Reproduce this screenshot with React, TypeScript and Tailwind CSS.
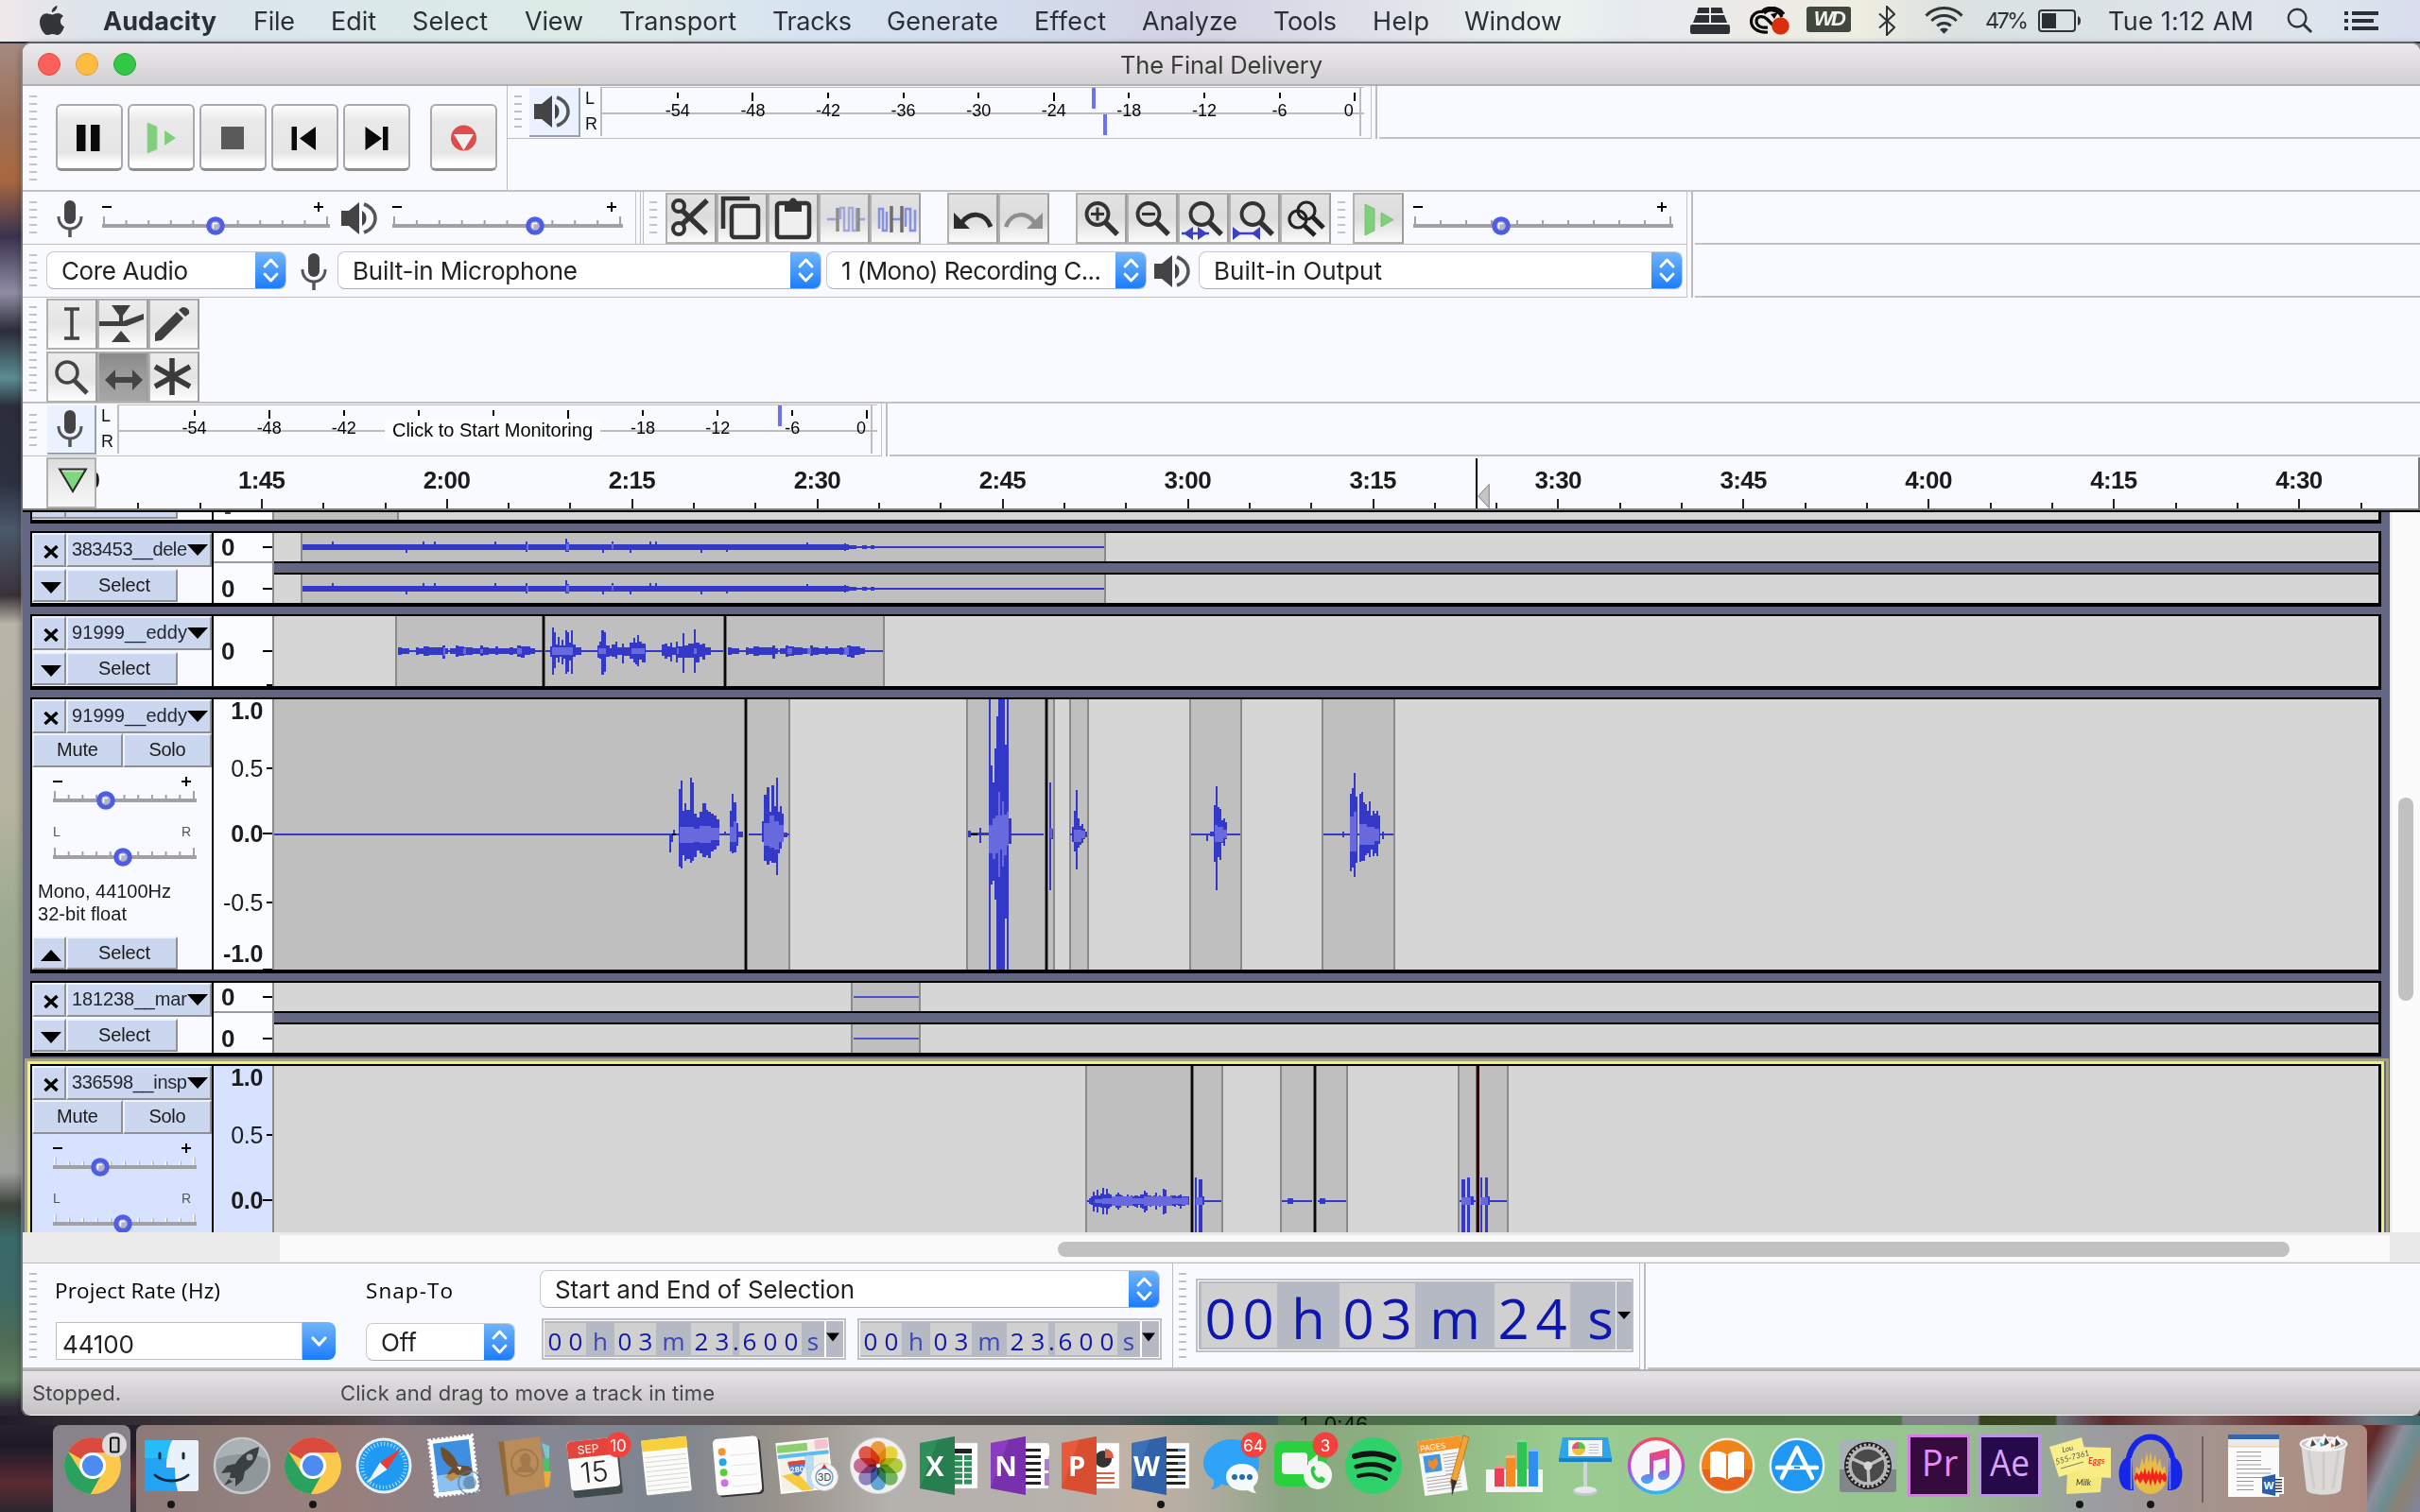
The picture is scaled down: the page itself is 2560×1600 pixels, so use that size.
import React, { useLayoutEffect, useRef, useState } from "react";
import type { ReactNode } from "react";

/* ---------- text fitted to the width of its box by tracking ---------- */
function Fit({ children, className = "" }: { children: string; className?: string }) {
  const box = useRef<HTMLSpanElement>(null);
  const inner = useRef<HTMLSpanElement>(null);
  const [ls, setLs] = useState(0);
  useLayoutEffect(() => {
    if (!box.current || !inner.current) return;
    const natural = inner.current.getBoundingClientRect().width;
    const target = box.current.getBoundingClientRect().width;
    setLs((target - natural) / Math.max(1, children.length - 1));
  }, [children]);
  return (
    <span ref={box} className={`block shrink-0 whitespace-pre ${className}`}>
      <span ref={inner} style={{ letterSpacing: `${ls}px` }}>
        {children}
      </span>
    </span>
  );
}

/* ---------- small shared parts ---------- */
function Grip({ n, className = "" }: { n: number; className?: string }) {
  return (
    <div className={`flex w-2 shrink-0 flex-col gap-1.5 ${className}`}>
      {Array.from({ length: n }, (_, i) => (
        <div key={i} className="h-0.5 w-2 bg-[#c2c2c6]" />
      ))}
    </div>
  );
}

function Mic({ className = "" }: { className?: string }) {
  return (
    <svg viewBox="0 0 28 40" className={`h-10 w-7 shrink-0 ${className}`}>
      <rect x="8" y="0" width="12" height="25" rx="6" fill="#444" />
      <path d="M2 17C2 25 7 30 14 30S26 25 26 17" fill="none" stroke="#555" strokeWidth="3" />
      <path d="M14 30V39" stroke="#555" strokeWidth="3.5" />
    </svg>
  );
}

function Speaker({ className = "" }: { className?: string }) {
  return (
    <svg viewBox="0 0 38 36" className={`h-9 w-[38px] shrink-0 ${className}`}>
      <path d="M0 10H8L19 1V35L8 26H0Z" fill="#444" />
      <path d="M22 10C28 13 28 23 22 26Z" fill="#444" />
      <path d="M24 3C40 9 40 27 24 33" fill="none" stroke="#555" strokeWidth="3.5" />
    </svg>
  );
}

function Slider({ w, thumb, light = false, ticks = 11, className = "" }: { w: number; thumb: number; light?: boolean; ticks?: number; className?: string }) {
  const step = (w - 5) / (ticks - 1);
  return (
    <svg width={w} height={24} viewBox={`0 0 ${w} 24`} className={`block shrink-0 overflow-visible ${className}`}>
      {Array.from({ length: ticks }, (_, i) => {
        const big = i === 0 || i === ticks - 1;
        return (
          <g key={i}>
            <rect x={1 + i * step} y={big ? 1 : 5} width="2" height={big ? 9 : 5} fill={light ? "#fff" : "#a2a2a2"} />
            {light && <rect x={2.5 + i * step} y={big ? 1 : 5} width="1" height={big ? 9 : 5} fill="#a2a2a2" />}
          </g>
        );
      })}
      <rect x="0" y="9" width={w} height="4" fill="#a1a1a1" />
      <circle cx={thumb} cy="11" r="7.3" fill="#b4b4c0" stroke="#4f5ce6" strokeWidth="5" />
      <path d={`M${thumb - 2.5} 13.5V8.5H${thumb + 2}`} stroke="#fff" strokeWidth="1.5" fill="none" />
    </svg>
  );
}

function SliderBlock({ w, thumb, ticks, className = "" }: { w: number; thumb: number; ticks?: number; className?: string }) {
  return (
    <div className={`flex shrink-0 flex-col ${className}`}>
      <div className="flex h-[16px] items-center justify-between pr-1.5">
        <span className="h-[2px] w-[10px] bg-black" />
        <PlusSign />
      </div>
      <Slider w={w} thumb={thumb} ticks={ticks} className="mt-px" />
    </div>
  );
}

function PlusSign() {
  return (
    <svg viewBox="0 0 12 12" className="size-3 shrink-0">
      <path d="M1 6H11M6 1V11" stroke="#000" strokeWidth="2" />
    </svg>
  );
}

function Chevrons() {
  return (
    <svg viewBox="0 0 33 40" className="h-full w-[33px]">
      <path d="M10 16L16.500 9L23 16M10 24L16.500 31L23 24" fill="none" stroke="#fff" strokeWidth="2.8" strokeLinecap="round" strokeLinejoin="round" />
    </svg>
  );
}

function Dropdown({ children, className = "" }: { children: ReactNode; className?: string }) {
  return (
    <div className={`flex h-10 shrink-0 items-stretch overflow-hidden rounded-[8px] border border-[#c9c9cd] border-b-[#aeaeb2] bg-white ${className}`}>
      <div className="flex flex-1 items-center pt-0.5 pl-[15px] font-[Inter] text-[26px] leading-none text-[#222]">{children}</div>
      <div className="-my-px -mr-px w-[33px] bg-linear-to-b from-[#6fb5f9] to-[#157bfb]">
        <Chevrons />
      </div>
    </div>
  );
}

function ToolBtn({ children, pressed = false, tone = "a" }: { children?: ReactNode; pressed?: boolean; tone?: "a" | "b" }) {
  const bg = pressed ? "from-[#8a8a8a] via-[#9c9c9c] to-[#a6a6a6]" : tone === "a" ? "from-[#e2e2e2] via-[#dcdcdc] to-[#fbfbfb]" : "from-[#ececec] via-[#e4e4e4] to-[#fdfdfd]";
  return (
    <div className={`flex h-[54px] w-[54px] shrink-0 items-center justify-center border-2 border-[#b0b0b0] border-r-[#9e9e9e] bg-linear-to-b ${bg}`}>
      {children}
    </div>
  );
}

function EndLines({ className = "" }: { className?: string }) {
  return (
    <div className={`flex shrink-0 gap-1 ${className}`}>
      <div className="w-px bg-[#c4c4c4]" />
      <div className="w-0.5 bg-[#bdbdbd]" />
    </div>
  );
}

/* ---------- menu bar ---------- */
function MenuBar() {
  return (
    <div className="flex h-11 shrink-0 items-center bg-[linear-gradient(90deg,#efe8ea_0,#dde4ea_90px,#dbe6ec_250px,#dcebe6_600px,#dfe9ea_700px,#d6e4f1_850px,#d3dcec_1080px,#d2d2e4_1250px,#dcdde8_1400px,#ebf2ee_1650px,#e6eaf0_1730px,#eceae6_1850px,#efeee2_1960px,#dce2e0_2060px,#dbe2e6_2180px,#dfe5ea_2400px,#dbe4ee_2480px,#d9dcec_2560px)] font-[Inter] text-[27px] leading-none text-[#2b3036]">
      <svg viewBox="0 0 26 32" className="ml-[42px] h-8 w-[26px] shrink-0" fill="#333539">
        <path d="M18.500 0C18.800 3 16 6.800 12.800 7C12.400 4 15.400 .6 18.500 0ZM13.300 9.600C14.800 9.600 16.300 8 19 8C21.500 8 23.800 9.300 25 11.200C20.500 13.700 21 20.300 26 22.200C25 25.500 21.900 31 19 31C17 31 16 29.900 13.500 29.900C11 29.900 10 31 8 31C4.500 31 0 23.500 0 17.500C0 11.500 3.800 8.300 7.500 8.300C10 8.300 12 9.600 13.300 9.600Z" />
      </svg>
      <Fit className="ml-[41px] w-[120px] font-bold">Audacity</Fit>
      <Fit className="ml-[39px] w-[44px]">File</Fit>
      <Fit className="ml-[38px] w-[48px]">Edit</Fit>
      <Fit className="ml-[38px] w-[80px]">Select</Fit>
      <Fit className="ml-[39px] w-[62px]">View</Fit>
      <Fit className="ml-[38px] w-[124px]">Transport</Fit>
      <Fit className="ml-[38px] w-[84px]">Tracks</Fit>
      <Fit className="ml-[37px] w-[118px]">Generate</Fit>
      <Fit className="ml-[38px] w-[76px]">Effect</Fit>
      <Fit className="ml-[38px] w-[101px]">Analyze</Fit>
      <Fit className="ml-[38px] w-[67px]">Tools</Fit>
      <Fit className="ml-[38px] w-[60px]">Help</Fit>
      <Fit className="ml-[37px] w-[103px]">Window</Fit>
      <svg viewBox="0 0 42 28" className="ml-[136px] h-7 w-[42px] shrink-0" fill="#2c2f36">
        <path d="M8.500 0H20V6H7ZM22 0H33.500L35 6H22ZM6 8H20V16H3ZM22 8H36L39 16H22Z" />
        <rect x="0" y="18" width="42" height="10" rx="2" />
      </svg>
      <svg viewBox="0 0 42 30" className="ml-[21px] h-[30px] w-[42px] shrink-0">
        <path d="M19 27C8 28 1.500 22 1.500 15.500C1.500 9 7 4.500 13 5.500C17 0 30 -1 36 8" fill="none" stroke="#0a0a0a" strokeWidth="3.200" />
        <path d="M19 22C12 23 7 20 7 15.500C7 10 14 9 18 13L25 20M15 7C21 1 31 4 34 11" fill="none" stroke="#0a0a0a" strokeWidth="3.200" />
        <path d="M22 8L30 6L26 13Z" fill="#0a0a0a" />
        <circle cx="32.500" cy="20.500" r="9.300" fill="#d8300c" />
      </svg>
      <div className="ml-[18px] -mt-1 flex h-[27px] w-[47px] shrink-0 items-center justify-center rounded-[3px] bg-[#40473f]">
        <span className="font-['Liberation_Sans'] text-[22px] leading-none font-bold tracking-[-2.500px] text-[#f3f3ea] italic">WD</span>
      </div>
      <svg viewBox="0 0 18 32" className="ml-[29px] h-8 w-[18px] shrink-0">
        <path d="M1 8.500L17 23L9 31V1L17 9L1 23.500" fill="none" stroke="#2c3236" strokeWidth="2" />
      </svg>
      <svg viewBox="0 0 42 30" className="ml-[31px] h-[30px] w-[41px] shrink-0">
        <path d="M1.500 9.500C12 -1.500 30 -1.500 40.500 9.500M7.500 15C15 7.500 27 7.500 34.500 15M13.500 20.500C17.500 16.500 24.500 16.500 28.500 20.500" fill="none" stroke="#2f3438" strokeWidth="3" />
        <path d="M21 29L16.500 24.500C19 22.500 23 22.500 25.500 24.500Z" fill="#2f3438" />
      </svg>
      <Fit className="ml-[23px] w-[46px] text-[23.500px]">47%</Fit>
      <svg viewBox="0 0 46 24" className="ml-[10px] h-6 w-[46px] shrink-0">
        <rect x="1" y="1" width="38" height="22" rx="3" fill="none" stroke="#2f3438" strokeWidth="2" />
        <rect x="4" y="4" width="15" height="16" fill="#2a2e32" />
        <path d="M42 7C46 8 46 16 42 17Z" fill="#2f3438" />
      </svg>
      <Fit className="ml-[28px] w-[154px]">Tue 1:12 AM</Fit>
      <svg viewBox="0 0 30 28" className="ml-[35px] h-7 w-[29px] shrink-0">
        <circle cx="11.500" cy="11" r="9.700" fill="none" stroke="#2f3438" strokeWidth="2.400" />
        <path d="M18.500 18L27 26.500" stroke="#2f3438" strokeWidth="3" />
      </svg>
      <svg viewBox="0 0 36 20" className="ml-[32px] h-5 w-9 shrink-0" fill="#2b2f38">
        <path d="M0 0H4V4H0ZM8 0H36V4H8ZM0 8H4V12H0ZM8 8H31V12H8ZM0 16H4V20H0ZM8 16H36V20H8Z" />
      </svg>
    </div>
  );
}

/* ---------- transport and playback meter ---------- */
function TransportBtn({ children, className = "" }: { children: ReactNode; className?: string }) {
  return (
    <div className={`flex h-[71px] w-[71px] shrink-0 items-center justify-center rounded-[6px] border-2 border-[#a9a9a9] border-b-[3px] border-b-[#8e8e8e] bg-[linear-gradient(180deg,#fdfdfd_0%,#e9e9e9_25%,#e6e6e6_75%,#ffffff_92%)] ${className}`}>
      <svg viewBox="0 0 66 66" className="size-[66px]">{children}</svg>
    </div>
  );
}

function MeterScale({ labels, cell, offset }: { labels: { t: string; long?: boolean }[]; cell: string; offset: string }) {
  return (
    <div className={`absolute inset-0 flex ${offset}`}>
      {labels.map((l, i) => (
        <div key={i} className={`flex shrink-0 flex-col items-center ${cell}`}>
          <div className={`mt-[7px] w-0.5 bg-black ${l.long ? "mb-px h-[9px]" : "mb-[4px] h-[6px]"}`} />
          <span className={`font-['Liberation_Sans'] text-[18px] leading-[18px] text-black ${l.t === "0" ? "-ml-[13px]" : ""}`}>{l.t}</span>
        </div>
      ))}
    </div>
  );
}

function LR({ className = "" }: { className?: string }) {
  return (
    <div className={`flex w-[14px] shrink-0 flex-col font-['Liberation_Sans'] text-[18px] leading-none text-[#111] ${className}`}>
      <span>L</span>
      <span className="mt-[9px]">R</span>
    </div>
  );
}

function RowTop() {
  return (
    <div className="flex h-[112px] shrink-0 border-b-2 border-[#c2c2c2]">
      <div className="flex w-[513px] shrink-0 border-r border-[#bdbdbd] pl-[7px]">
        <Grip n={12} className="mt-[10px]" />
        <div className="mt-[19px] ml-5 flex gap-[5px]">
          <TransportBtn>
            <path d="M19 20H28.500V48H19ZM34 20H43.500V48H34Z" fill="#0a0a0a" />
          </TransportBtn>
          <TransportBtn>
            <path d="M18 18L28 22V46L18 50ZM36 26L48 34L36 42Z" fill="#7fcf7c" />
            <path d="M18 18L28 22V46L18 50Z" fill="none" stroke="#9bd698" />
          </TransportBtn>
          <TransportBtn>
            <rect x="20" y="22" width="24" height="24" fill="#5a5a5a" />
          </TransportBtn>
          <TransportBtn>
            <path d="M18.500 22H24V47H18.500ZM44 22V47L27 34.500Z" fill="#0a0a0a" />
          </TransportBtn>
          <TransportBtn>
            <path d="M20.500 22V47L38 34.500ZM39 22H44.500V47H39Z" fill="#0a0a0a" />
          </TransportBtn>
          <TransportBtn className="ml-4">
            <circle cx="32.500" cy="34" r="13.500" fill="#e04c4c" />
            <path d="M22 30H43L32.500 47Z" fill="#f0f0f0" />
          </TransportBtn>
        </div>
      </div>
      <div className="flex min-w-0 flex-1 flex-col">
        <div className="flex h-14 shrink-0 items-stretch">
          <div className="flex w-[913px] shrink-0 border-b border-[#bdbdbd] pl-[7px]">
            <Grip n={5} className="mt-[10px]" />
            <div className="mt-[2px] ml-2 flex h-[52px] w-[54px] items-center justify-center border-r-2 border-b-2 border-[#98a0b4] bg-[#eaf1ff] pr-1">
              <Speaker />
            </div>
            <LR className="mt-[4px] ml-[5px]" />
            <div className="relative ml-[2px] w-[808px] shrink-0">
              <div className="flex h-full flex-col">
                <div className="mt-px h-[28px] border-t border-b border-l-2 border-[#bdbdbd]" />
                <div className="h-[24px] border-t border-l-2 border-[#bdbdbd]" />
              </div>
              <MeterScale
                offset="pl-[42px]"
                cell="w-[79.600px]"
                labels={[{ t: "-54" }, { t: "-48", long: true }, { t: "-42" }, { t: "-36" }, { t: "-30" }, { t: "-24", long: true }, { t: "-18" }, { t: "-12" }, { t: "-6" }, { t: "0", long: true }]}
              />
              <div className="absolute top-[2px] left-[520px] h-[22px] w-1 bg-[#6b70f8]" />
              <div className="absolute top-[30px] left-[532px] h-[22px] w-1 bg-[#6b70f8]" />
              <div className="absolute top-[1px] left-[803px] h-[52px] w-[7px] border-l-2 border-[#bdbdbd]" />
            </div>
          </div>
          <EndLines />
          <div className="ml-[2px] flex-1 border-b-2 border-[#c2c2c2]" />
        </div>
      </div>
    </div>
  );
}

/* ---------- mixer, edit and play-at-speed ---------- */
function Magnifier({ children, shift = 0 }: { children?: ReactNode; shift?: number }) {
  return (
    <svg viewBox="0 0 50 50" className="size-[50px]">
      <circle cx={21 + shift} cy="20.500" r="11.500" fill="none" stroke="#333" strokeWidth="3.800" />
      <path d={`M${29 + shift} 29L${42 + shift} 42`} stroke="#333" strokeWidth="5.500" />
      {children}
    </svg>
  );
}

function RowMixer() {
  return (
    <div className="flex h-14 shrink-0">
      <div className="flex w-[1760px] shrink-0 border-b border-[#bdbdbd] pl-[7px]">
        <Grip n={5} className="mt-[10px]" />
        <Mic className="mt-[9px] ml-[21px]" />
        <SliderBlock w={241} thumb={120} className="mt-[8px] ml-5" />
        <Speaker className="mt-[10px] ml-3" />
        <SliderBlock w={244} thumb={151} className="mt-[8px] ml-4" />
        <div className="ml-[13px] flex gap-1">
          <div className="w-px bg-[#c4c4c4]" />
          <div className="w-1 border-x border-[#bdbdbd]" />
        </div>
        <Grip n={5} className="mt-[10px] ml-[6px]" />
        <div className="mt-px ml-[9px] flex">
          <ToolBtn>
            <svg viewBox="0 0 50 50" className="size-[50px]">
              <g fill="none" stroke="#333" strokeWidth="4">
                <circle cx="12" cy="12" r="6" />
                <circle cx="12" cy="36" r="6" />
                <path d="M16 17L41 41M16 31L42 6" strokeWidth="5.500" />
              </g>
            </svg>
          </ToolBtn>
          <ToolBtn>
            <svg viewBox="0 0 50 50" className="size-[50px]">
              <path d="M5 36V4H33" fill="none" stroke="#333" strokeWidth="4.500" />
              <rect x="14" y="12" width="28" height="33" rx="3" fill="#efefef" stroke="#333" strokeWidth="4.500" />
            </svg>
          </ToolBtn>
          <ToolBtn>
            <svg viewBox="0 0 50 50" className="size-[50px]">
              <rect x="8" y="9" width="34" height="36" rx="3" fill="#efefef" stroke="#333" strokeWidth="4.500" />
              <path d="M16 18V8H21C21 2 29 2 29 8H34V18Z" fill="#333" />
            </svg>
          </ToolBtn>
          <ToolBtn>
            <svg viewBox="0 0 50 50" className="size-[50px]">
              <path d="M7 26H17M38 26H47" stroke="#9aa2d8" strokeWidth="2.500" />
              <path d="M21 26V14H25V38H30V14H34V38H38V14" fill="none" stroke="#a2a8dc" strokeWidth="2.500" />
              <path d="M18 14V39M40 14V39" stroke="#8e8e8e" strokeWidth="3.500" />
            </svg>
          </ToolBtn>
          <ToolBtn>
            <svg viewBox="0 0 50 50" className="size-[50px]">
              <path d="M8 36V15H12V38H16V18M21 26H31M36 34V15H41V38H46V16" fill="none" stroke="#8490e4" strokeWidth="2.500" />
              <path d="M21 12V40M32 12V40" stroke="#6e6e6e" strokeWidth="3.500" />
            </svg>
          </ToolBtn>
        </div>
        <div className="mt-px ml-7 flex">
          <ToolBtn>
            <svg viewBox="0 0 50 50" className="size-[50px]">
              <path d="M44 34C38 18 22 18 14 29" fill="none" stroke="#2c2c2c" strokeWidth="5" />
              <path d="M5 19V36H22Z" fill="#2c2c2c" />
            </svg>
          </ToolBtn>
          <ToolBtn>
            <svg viewBox="0 0 50 50" className="size-[50px]">
              <path d="M6 34C12 18 28 18 36 29" fill="none" stroke="#8e8e8e" strokeWidth="4.500" />
              <path d="M45 19V36H28Z" fill="#8e8e8e" />
            </svg>
          </ToolBtn>
        </div>
        <div className="mt-px ml-7 flex">
          <ToolBtn>
            <Magnifier>
              <path d="M14 20.500H28M21 13.500V27.500" stroke="#333" strokeWidth="3" />
            </Magnifier>
          </ToolBtn>
          <ToolBtn>
            <Magnifier>
              <path d="M14 20.500H28" stroke="#333" strokeWidth="3" />
            </Magnifier>
          </ToolBtn>
          <ToolBtn>
            <Magnifier shift={2}>
              <path d="M2 41H31" stroke="#3a3fc4" strokeWidth="2.500" />
              <path d="M4 41L14 34V48ZM29 41L19 34V48Z" fill="#3a3fc4" />
            </Magnifier>
          </ToolBtn>
          <ToolBtn>
            <Magnifier shift={2}>
              <path d="M2 41H31" stroke="#3a3fc4" strokeWidth="2.500" />
              <path d="M2 34L11 41L2 48ZM31 34L22 41L31 48Z" fill="#3a3fc4" />
            </Magnifier>
          </ToolBtn>
          <ToolBtn>
            <svg viewBox="0 0 50 50" className="size-[50px]">
              <g fill="none" stroke="#222" strokeWidth="3.200">
                <circle cx="26" cy="17" r="9" />
                <circle cx="17" cy="26" r="9" />
                <path d="M32 23L44 35M23 32L35 43" strokeWidth="5" />
              </g>
            </svg>
          </ToolBtn>
        </div>
        <Grip n={5} className="mt-[10px] ml-[7px]" />
        <div className="mt-px ml-[8px]">
          <ToolBtn>
            <svg viewBox="0 0 50 50" className="size-[50px]">
              <path d="M11 10L21 15V38L11 43ZM28 19L41 26.500L28 34Z" fill="#7fcf7c" stroke="#6dbb6a" strokeWidth=".8" />
            </svg>
          </ToolBtn>
        </div>
        <SliderBlock w={275} thumb={93} className="mt-[8px] ml-[10px]" />
      </div>
      <EndLines />
      <div className="ml-[2px] flex-1 border-b-2 border-[#c2c2c2]" />
    </div>
  );
}

/* ---------- device toolbar ---------- */
function RowDevice() {
  return (
    <div className="flex h-14 shrink-0">
      <div className="flex w-[1760px] shrink-0 border-b border-[#bdbdbd] pl-[7px]">
        <Grip n={5} className="mt-[10px]" />
        <Dropdown className="mt-[7px] ml-[10px] w-[254px]">
          <Fit className="w-[134px]">Core Audio</Fit>
        </Dropdown>
        <Mic className="mt-[9px] ml-[15px]" />
        <Dropdown className="mt-[7px] ml-[11px] w-[512px]">
          <Fit className="w-[238px]">Built-in Microphone</Fit>
        </Dropdown>
        <Dropdown className="mt-[7px] ml-[5px] w-[339px]">
          <Fit className="w-[275px]">1 (Mono) Recording C...</Fit>
        </Dropdown>
        <Speaker className="mt-[10px] ml-[8px]" />
        <Dropdown className="mt-[7px] ml-[9px] w-[512px]">
          <Fit className="w-[178px]">Built-in Output</Fit>
        </Dropdown>
      </div>
      <EndLines />
      <div className="ml-[2px] flex-1 border-b-2 border-[#c2c2c2]" />
    </div>
  );
}

/* ---------- tools toolbar ---------- */
function RowTools() {
  return (
    <div className="flex h-28 shrink-0 border-b-2 border-[#c2c2c2] pl-[7px]">
      <Grip n={12} className="mt-[9px]" />
      <div className="ml-[10px] flex flex-col gap-[2px] pt-px">
        <div className="flex">
          <ToolBtn tone="b">
            <svg viewBox="0 0 50 50" className="size-[50px]">
              <path d="M17 9H33M17 40H33M25 9V40" stroke="#444" strokeWidth="3.500" />
            </svg>
          </ToolBtn>
          <ToolBtn tone="b">
            <svg viewBox="0 0 50 50" className="size-[50px]">
              <path d="M13 5H33L25 16V22L47 14V20L29 27H0V22H21V16ZM13 44H33L23 32Z" fill="#3f3f3f" />
            </svg>
          </ToolBtn>
          <ToolBtn tone="b">
            <svg viewBox="0 0 50 50" className="size-[50px]">
              <path d="M5 43V35L28 12L35 19L12 42Z" fill="#3f3f3f" />
              <path d="M30 10L34 7C39 7 42 10 41 14L37 17Z" fill="#3f3f3f" />
            </svg>
          </ToolBtn>
        </div>
        <div className="flex">
          <ToolBtn tone="b">
            <svg viewBox="0 0 50 50" className="size-[50px]">
              <circle cx="20" cy="20" r="11" fill="none" stroke="#444" strokeWidth="3.500" />
              <path d="M28 29L41 42" stroke="#444" strokeWidth="5" />
            </svg>
          </ToolBtn>
          <ToolBtn pressed>
            <svg viewBox="0 0 50 50" className="size-[50px]">
              <path d="M6 28L17 17V25H35V17L46 28L35 39V31H17V39Z" fill="#444" />
            </svg>
          </ToolBtn>
          <ToolBtn tone="b">
            <svg viewBox="0 0 50 50" className="size-[50px]">
              <path d="M23 5V44M5 14L42 35M42 14L5 35" stroke="#3a3a3a" strokeWidth="5.500" />
            </svg>
          </ToolBtn>
        </div>
      </div>
    </div>
  );
}

/* ---------- recording meter ---------- */
function RowRecMeter() {
  return (
    <div className="flex h-14 shrink-0">
      <div className="flex w-[908px] shrink-0 border-b border-[#bdbdbd] pl-[7px]">
        <Grip n={5} className="mt-[11px]" />
        <div className="mt-[2px] ml-[11px] flex h-[52px] w-[52px] items-center justify-center border-r-2 border-b-2 border-[#98a0b4] bg-[#eaf1ff]">
          <Mic className="-ml-[3px]" />
        </div>
        <LR className="mt-[4px] ml-[5px]" />
        <div className="relative ml-[3px] w-[804px] shrink-0">
          <div className="flex h-full flex-col">
            <div className="mt-px h-[28px] border-t border-b border-l-2 border-[#bdbdbd]" />
            <div className="h-[24px] border-t border-l-2 border-[#bdbdbd]" />
          </div>
          <MeterScale
            offset="pl-[42px]"
            cell="w-[79.100px]"
            labels={[{ t: "-54" }, { t: "-48", long: true }, { t: "-42" }, { t: " " }, { t: " " }, { t: " ", long: true }, { t: "-18" }, { t: "-12" }, { t: "-6" }, { t: "0", long: true }]}
          />
          <div className="absolute top-[16px] left-[283px] flex h-6 w-[228px] items-center justify-center bg-[#fcfdff]">
            <Fit className="w-[212px] font-['Liberation_Sans'] text-[20px] leading-none text-black">Click to Start Monitoring</Fit>
          </div>
          <div className="absolute top-[2px] left-[699px] h-[22px] w-1 bg-[#6b70f8]" />
          <div className="absolute top-[1px] left-[797px] h-[52px] w-[6px] border-l-2 border-[#bdbdbd]" />
        </div>
      </div>
      <EndLines />
      <div className="ml-[2px] flex-1 border-b-2 border-[#c2c2c2]" />
    </div>
  );
}

/* ---------- time ruler ---------- */
const marks = ["1:30", "1:45", "2:00", "2:15", "2:30", "2:45", "3:00", "3:15", "3:30", "3:45", "4:00", "4:15", "4:30"];

function TimeRuler() {
  return (
    <div className="relative h-[59px] shrink-0 overflow-hidden border-b-2 border-black">
      <div className="-ml-[41px] flex h-[57px] border-b-2 border-[#7d7d7d]">
        {marks.map((m) => (
          <div key={m} className="flex w-[195.950px] shrink-0 flex-col items-center">
            <Fit className="mt-[12px] w-[50px] font-['Liberation_Sans'] text-[26px] leading-[26px] font-bold text-[#1c1c1c]">{m}</Fit>
            <div className="mt-auto flex items-end gap-[63.300px]">
              <div className="h-1.5 w-0.5 bg-[#222]" />
              <div className="h-2.5 w-0.5 bg-[#222]" />
              <div className="h-1.5 w-0.5 bg-[#222]" />
            </div>
          </div>
        ))}
      </div>
      <div className="absolute top-px left-[25px] flex h-[54px] w-[53px] items-center justify-center border-2 border-[#b0b0b0] bg-linear-to-b from-[#dcdcdc] via-[#ececec] to-[#f6f6f6]">
        <svg viewBox="0 0 34 30" className="-mt-1 ml-0.5 h-[30px] w-[34px]">
          <path d="M3 2.500H31L17 26Z" fill="#7fd67c" stroke="#2a2a2a" strokeWidth="2" />
          <path d="M6 4.500H28" stroke="#c9f0c4" strokeWidth="1.500" />
        </svg>
      </div>
      <div className="absolute top-[2px] left-[1537px] h-[53px] w-0.5 bg-black" />
      <svg viewBox="0 0 13 27" className="absolute top-[29px] left-[1539px] h-[26px] w-[13px]">
        <path d="M12.500 .5L.5 13.500L12.500 26.500Z" fill="#c4c4c4" stroke="#7a7a7a" />
      </svg>
      <div className="absolute top-[1px] right-0 h-[55px] w-0.5 bg-[#777]" />
    </div>
  );
}

/* ---------- wave drawings ---------- */
type Seg = [number, number, number];

/* Stepped envelope round the centre line: each entry holds until the next x. */
function env(cy: number, segs: Seg[]) {
  let d = "";
  for (let i = 0; i < segs.length - 1; i++) {
    const [x, u, l] = segs[i];
    if (u + l > 0) d += `M${x} ${cy - u}H${segs[i + 1][0]}V${cy + l}H${x}Z`;
  }
  return d;
}

/* Repeatable noise for quiet passages. */
function noise(x0: number, x1: number, lo: number, hi: number, seed: number): Seg[] {
  const out: Seg[] = [];
  let s = seed;
  for (let x = x0; x < x1; x += 2) {
    s = (s * 16807) % 2147483647;
    const r = s / 2147483647;
    const swell = 0.55 + 0.45 * Math.sin((x - x0) / 9 + seed);
    const a = lo + (hi - lo) * r * r * Math.abs(swell);
    out.push([x, a, a * (0.8 + 0.3 * r)]);
  }
  out.push([x1, 0, 0]);
  return out;
}

function Clip({ x0, x1, y0, y1, splits = [], red = false }: { x0: number; x1: number; y0: number; y1: number; splits?: number[]; red?: boolean }) {
  return (
    <g>
      <rect x={x0} y={y0} width={x1 - x0} height={y1 - y0} fill="#bfbfbf" />
      <path d={`M${x0 + 1} ${y0}V${y1}M${x1 - 1} ${y0}V${y1}`} stroke="#8a8a8a" strokeWidth="2" />
      {splits.map((s) => (
        <g key={s}>
          <path d={`M${s} ${y0}V${y1}`} stroke="#6e6e6e" strokeWidth="4" />
          <path d={`M${s} ${y0}V${y1}`} stroke={red ? "#2a0505" : "#080808"} strokeWidth={red ? 3 : 2} />
        </g>
      ))}
    </g>
  );
}

function Canvas({ y, h, children }: { y: number; h: number; children?: ReactNode }) {
  return (
    <svg width="2226" height={h} viewBox={`290 ${y} 2226 ${h}`} className="block shrink-0 bg-[#d6d6d6]" shapeRendering="crispEdges">
      {children}
    </svg>
  );
}

const BLUE = "#3438c8";
const RMS = "#6769dc";

function WaveDele({ y, h }: { y: number; h: number }) {
  const cy = y + 15;
  const ticks: Seg[] = [[351, 6, 0], [429, 0, 6], [447, 6, 0], [459, 6, 0], [523, 6, 0], [556, 6, 5], [598, 9, 5], [600, 5, 5], [637, 0, 6], [647, 6, 3], [666, 0, 6], [687, 6, 0], [693, 6, 0], [741, 0, 6], [768, 0, 5], [853, 5, 0], [893, 4, 4]];
  return (
    <Canvas y={y} h={h}>
      <Clip x0={318} x1={1170} y0={y} y1={y + h} />
      <path d={env(cy, [[320, 3, 3], [898, 2, 2], [906, 1, 1], [912, 2, 2], [917, 1, 1], [921, 2, 2], [925, 1, 1], [1168, 0, 0]])} fill={BLUE} />
      {ticks.map(([x, u, l]) => (
        <rect key={x} x={x} y={cy - u} width="2" height={u + l} fill={BLUE} />
      ))}
      <rect x="599" y={cy - 4} width="3" height="8" fill={RMS} />
      <rect x="557" y={cy - 3} width="2" height="6" fill={RMS} />
      <rect x="647" y={cy - 4} width="2" height="6" fill={RMS} />
    </Canvas>
  );
}

function WaveEddySmall() {
  const c = 689;
  const mid: Seg[] = [
    [577, 1, 1], [582, 5, 6], [584, 25, 25], [586, 20, 18], [588, 7, 7], [590, 15, 12], [592, 6, 6], [594, 12, 14], [596, 6, 8], [598, 22, 24], [600, 20, 22], [602, 9, 10], [604, 22, 24], [606, 7, 6], [609, 4, 4], [615, 1, 1],
    [632, 6, 7], [634, 10, 8], [636, 22, 25], [639, 20, 22], [641, 6, 6], [645, 3, 5], [647, 7, 6], [651, 10, 8], [653, 4, 4], [658, 8, 13], [660, 4, 5], [666, 9, 8], [670, 14, 12], [672, 9, 14], [674, 17, 16], [676, 10, 9], [679, 8, 12], [683, 1, 1],
    [700, 7, 5], [703, 8, 8], [706, 5, 6], [709, 9, 11], [711, 4, 4], [715, 10, 12], [717, 5, 7], [722, 19, 23], [724, 6, 7], [728, 8, 7], [734, 23, 23], [736, 9, 12], [740, 7, 6], [743, 8, 9], [746, 4, 4], [752, 1, 1], [765, 0, 0],
  ];
  const quiet: Seg[] = [
    [0, 4, 4], [4, 3, 3], [12, 1, 1], [19, 4, 4], [22, 3, 3], [27, 5, 5], [33, 4, 4], [41, 4, 4], [47, 6, 8], [50, 3, 3], [53, 1, 1], [55, 3, 3], [61, 6, 6], [64, 5, 5], [70, 4, 4], [76, 4, 4], [79, 3, 3], [87, 6, 5], [90, 4, 4], [96, 3, 3], [103, 5, 4], [106, 3, 3], [118, 4, 4], [122, 3, 3], [126, 6, 6], [130, 5, 7], [134, 5, 4], [140, 3, 3], [145, 1, 1],
  ];
  const at = (x: number, end: number): Seg[] => [...quiet.map(([q, u, l]) => [x + q, u, l] as Seg), [end, 0, 0]];
  return (
    <Canvas y={652} h={74}>
      <Clip x0={418} x1={936} y0={652} y1={726} splits={[575, 767]} />
      <path d={env(c, at(421, 574))} fill={BLUE} />
      <path d={env(c, mid)} fill={BLUE} />
      <path d={env(c, at(770, 934))} fill={BLUE} />
      <path d={env(c, [[469, 4, 5], [471, 0, 0], [490, 3, 3], [493, 0, 0], [508, 2, 2], [511, 0, 0], [547, 3, 3], [552, 0, 0], [584, 4, 4], [606, 0, 0], [633, 3, 3], [641, 0, 0], [668, 3, 3], [682, 0, 0], [716, 3, 3], [718, 0, 0], [734, 3, 3], [737, 0, 0], [833, 3, 3], [838, 0, 0], [854, 3, 3], [858, 0, 0], [893, 4, 4], [898, 0, 0]])} fill={RMS} />
    </Canvas>
  );
}

function WaveEddyTall() {
  const c = 883;
  const a: Seg[] = [
    [290, 1, 1], [708, 1, 19], [710, 1, 8], [712, 5, 1], [714, 1, 1], [718, 48, 34], [720, 57, 36], [722, 25, 22], [724, 33, 28], [726, 26, 26], [730, 60, 30], [732, 55, 28], [734, 22, 24], [737, 18, 17], [740, 24, 20], [743, 33, 24], [747, 26, 22], [749, 24, 25], [752, 22, 18], [755, 20, 16], [758, 16, 12], [761, 1, 1], [766, 3, 1], [768, 1, 1], [772, 25, 18], [774, 43, 20], [776, 34, 19], [779, 12, 12], [781, 3, 3], [786, 0, 0],
    [792, 1, 1], [806, 14, 8], [808, 42, 28], [811, 50, 32], [814, 24, 28], [816, 52, 30], [819, 30, 30], [821, 60, 43], [823, 24, 20], [825, 30, 15], [827, 22, 8], [829, 2, 3], [833, 1, 1], [835, 0, 0],
    [1024, 4, 3], [1027, 2, 1], [1036, 7, 9], [1038, 2, 1], [1046, 143, 143], [1048, 73, 53], [1050, 55, 49], [1052, 91, 69], [1054, 125, 143], [1056, 143, 143], [1063, 95, 89], [1065, 143, 143], [1067, 17, 10], [1070, 1, 1], [1104, 0, 0],
    [1110, 55, 59], [1112, 6, 5], [1114, 0, 0],
    [1132, 1, 1], [1134, 8, 8], [1136, 25, 18], [1138, 47, 37], [1140, 17, 14], [1142, 9, 11], [1144, 11, 9], [1146, 6, 5], [1148, 3, 3], [1150, 0, 0],
    [1260, 1, 1], [1276, 1, 7], [1278, 1, 1], [1280, 3, 2], [1284, 31, 29], [1286, 51, 59], [1288, 29, 24], [1290, 27, 27], [1292, 15, 9], [1294, 17, 12], [1296, 13, 5], [1298, 1, 1], [1312, 0, 0],
    [1400, 1, 1], [1420, 3, 3], [1422, 1, 1], [1428, 43, 39], [1430, 49, 35], [1432, 65, 45], [1434, 40, 30], [1436, 1, 1], [1438, 43, 29], [1440, 45, 28], [1442, 34, 28], [1444, 32, 22], [1446, 25, 20], [1448, 35, 24], [1450, 20, 16], [1452, 25, 23], [1454, 22, 20], [1456, 25, 23], [1458, 20, 10], [1460, 1, 1], [1462, 3, 5], [1464, 1, 1], [1474, 0, 0],
  ];
  const r: Seg[] = [
    [719, 8, 9], [734, 6, 8], [740, 9, 9], [752, 7, 6], [761, 0, 0], [772, 8, 8], [776, 14, 8], [779, 0, 0], [808, 12, 12], [814, 20, 14], [819, 14, 16], [824, 10, 8], [829, 0, 0],
    [1046, 10, 20], [1050, 17, 26], [1053, 20, 20], [1056, 45, 45], [1058, 20, 16], [1060, 35, 34], [1062, 21, 22], [1065, 24, 12], [1067, 0, 0],
    [1111, 7, 4], [1113, 0, 0], [1136, 5, 8], [1144, 4, 4], [1148, 0, 0], [1285, 10, 8], [1288, 8, 8], [1294, 5, 4], [1298, 0, 0], [1428, 19, 18], [1432, 24, 18], [1435, 0, 0], [1438, 11, 11], [1446, 8, 11], [1454, 6, 7], [1459, 0, 0],
  ];
  return (
    <Canvas y={740} h={286}>
      <Clip x0={288} x1={836} y0={740} y1={1026} splits={[789]} />
      <Clip x0={1022} x1={1116} y0={740} y1={1026} splits={[1107]} />
      <Clip x0={1131} x1={1152} y0={740} y1={1026} />
      <Clip x0={1258} x1={1314} y0={740} y1={1026} />
      <Clip x0={1398} x1={1476} y0={740} y1={1026} />
      <path d={env(c, a)} fill={BLUE} />
      <path d={env(c, r)} fill={RMS} />
      <path d="M1027 883H1034M711 883H715" stroke="#000" strokeWidth="2" />
    </Canvas>
  );
}

function WaveMar({ y, h }: { y: number; h: number }) {
  return (
    <Canvas y={y} h={h}>
      <Clip x0={900} x1={974} y0={y} y1={y + h} />
      <rect x="903" y={y + 14} width="69" height="2" fill="#4e52cc" />
    </Canvas>
  );
}

function WaveInsp() {
  const c = 1271;
  const a: Seg[] = [
    [1264, 25, 40], [1266, 4, 4], [1268, 23, 40], [1272, 5, 4], [1274, 1, 1], [1292, 0, 0],
    [1356, 1, 1], [1362, 3, 3], [1368, 1, 1], [1388, 0, 0], [1394, 1, 1], [1396, 3, 3], [1402, 1, 1], [1424, 0, 0],
    [1544, 1, 1], [1546, 23, 40], [1550, 4, 4], [1552, 25, 40], [1555, 5, 4], [1559, 1, 1], [1561, 0, 0],
    [1566, 25, 40], [1568, 4, 4], [1571, 25, 40], [1574, 5, 4], [1576, 1, 1], [1594, 0, 0],
  ];
  return (
    <Canvas y={1128} h={176}>
      <Clip x0={1148} x1={1294} y0={1128} y1={1304} splits={[1261]} />
      <Clip x0={1354} x1={1426} y0={1128} y1={1304} splits={[1391]} />
      <Clip x0={1542} x1={1596} y0={1128} y1={1304} splits={[1563]} red />
      <path d={env(c, noise(1154, 1258, 5, 17, 911))} fill={BLUE} />
      <path d={env(c, [[1150, 1, 1], [1152, 3, 3], [1156, 4, 4], [1258, 0, 0]])} fill={BLUE} />
      <path d={env(c, [[1158, 2, 2], [1166, 3, 3], [1176, 5, 5], [1198, 3, 3], [1210, 5, 5], [1240, 3, 3], [1250, 4, 4], [1257, 0, 0]])} fill={RMS} />
      <path d={env(c, a)} fill={BLUE} />
      <path d={env(c, [[1265, 4, 4], [1272, 0, 0], [1546, 4, 4], [1556, 0, 0], [1566, 4, 4], [1574, 0, 0]])} fill={RMS} />
    </Canvas>
  );
}

/* ---------- track frames ---------- */
function PanelBtn({ children, className = "" }: { children?: ReactNode; className?: string }) {
  return (
    <div className={`flex shrink-0 items-center border-t-2 border-r-2 border-b-2 border-l-2 border-t-[#eef3ff] border-r-[#8e9096] border-b-[#8e9096] border-l-[#eef3ff] bg-[#cbd7ef] ${className}`}>{children}</div>
  );
}

function Tri({ up = false }: { up?: boolean }) {
  return (
    <svg viewBox="0 0 22 12" className={`h-3 w-[22px] shrink-0 ${up ? "rotate-180" : ""}`}>
      <path d="M0 0H22L11 12Z" fill="#000" />
    </svg>
  );
}

function SelectRow({ up = false, className = "" }: { up?: boolean; className?: string }) {
  return (
    <div className={`flex ${className}`}>
      <PanelBtn className="h-[35px] w-9 justify-center pt-[5px] pl-[3px]">
        <Tri up={up} />
      </PanelBtn>
      <PanelBtn className="h-[35px] w-[118px] justify-center pb-[2px] pl-[5px]">
        <Fit className="w-[55px] font-['Liberation_Sans'] text-[20px] leading-none text-[#1a1a1a]">Select</Fit>
      </PanelBtn>
    </div>
  );
}

function Panel({ name, full = false, active = false, gain = 56 }: { name: string; full?: boolean; active?: boolean; gain?: number }) {
  return (
    <div className={`flex w-[192px] shrink-0 flex-col overflow-hidden border-r-2 border-black ${active ? "bg-[#d6e2ff]" : "bg-[#f8faff]"}`}>
      <div className="flex shrink-0">
        <PanelBtn className="h-9 w-9 justify-center">
          <svg viewBox="0 0 16 14" className="mt-1 ml-1 h-3.5 w-4">
            <path d="M1.500 1L14.500 13M14.500 1L1.500 13" stroke="#000" strokeWidth="3.400" />
          </svg>
        </PanelBtn>
        <PanelBtn className="h-9 w-[154px] justify-start pb-0.5 pl-[4px]">
          <Fit className="w-[122px] font-['Liberation_Sans'] text-[20px] leading-[24px] text-[#23262e]">{name}</Fit>
          <div className="mt-0.5">
            <Tri />
          </div>
        </PanelBtn>
      </div>
      {full ? (
        <>
          <div className="flex shrink-0">
            <PanelBtn className="h-[36px] w-[96px] justify-center pb-0.5">
              <Fit className="w-[44px] font-['Liberation_Sans'] text-[20px] leading-none text-[#1a1a1a]">Mute</Fit>
            </PanelBtn>
            <PanelBtn className="h-[36px] w-[94px] justify-center pb-0.5">
              <Fit className="w-[39px] font-['Liberation_Sans'] text-[20px] leading-none text-[#1a1a1a]">Solo</Fit>
            </PanelBtn>
          </div>
          <div className="mt-[9px] ml-[22px] flex w-[152px] shrink-0 flex-col">
            <div className="flex h-3 items-center justify-between pr-[5px]">
              <span className="h-0.5 w-2.5 bg-black" />
              <PlusSign />
            </div>
            <Slider w={152} thumb={gain} light={active} className="mt-[3px]" />
            <div className="mt-[13px] flex h-3.5 items-center justify-between pr-[6px] font-['Liberation_Sans'] text-[14px] leading-none text-[#555]">
              <span>L</span>
              <span>R</span>
            </div>
            <Slider w={152} thumb={74} light={active} className="mt-[9px]" />
          </div>
          <div className="mt-[11px] ml-[6px] flex shrink-0 flex-col font-['Liberation_Sans'] text-[20px] leading-6 text-[#1a1a1a]">
            <Fit className="w-[141px]">Mono, 44100Hz</Fit>
            <Fit className="w-[94px]">32-bit float</Fit>
          </div>
          <SelectRow up className="mt-auto" />
        </>
      ) : (
        <SelectRow className="mt-[2px]" />
      )}
    </div>
  );
}

function RulerBox({ children, active = false }: { children?: ReactNode; active?: boolean }) {
  return <div className={`flex w-16 shrink-0 flex-col border-r-2 border-[#8a8a8a] ${active ? "bg-[#d6e2ff]" : "bg-[#fbfcff]"}`}>{children}</div>;
}

function ZeroMark({ className = "" }: { className?: string }) {
  return (
    <div className={`flex shrink-0 items-center justify-between pl-[8px] font-['Liberation_Sans'] text-[26px] leading-none font-bold text-[#1c1c1c] ${className}`}>
      <span className="-mt-px">0</span>
      <span className="h-0.5 w-2.5 bg-black" />
    </div>
  );
}

function ScaleMark({ t, bold = false, tick = "", className = "" }: { t: string; bold?: boolean; tick?: string; className?: string }) {
  return (
    <div className={`flex h-6 shrink-0 items-center justify-end font-['Liberation_Sans'] text-[25px] leading-none tracking-[-0.300px] text-[#1c1c1c] ${bold ? "font-bold" : ""} ${tick ? "" : "pr-[10px]"} ${className}`}>
      <span>{t}</span>
      {tick && <span className={`h-0.5 bg-black ${tick}`} />}
    </div>
  );
}

function TallScale({ active = false }: { active?: boolean }) {
  return (
    <RulerBox active={active}>
      <ScaleMark t="1.0" bold />
      <ScaleMark t="0.5" tick="w-1.5 ml-1" className="mt-[37px]" />
      <ScaleMark t="0.0" bold tick="w-2.5" className="mt-[45px]" />
      <ScaleMark t="-0.5" tick="w-1.5 ml-1" className="mt-[49px]" />
      <ScaleMark t="-1.0" bold className="mt-[30px]" />
      <span className="mt-[4px] h-0.5 w-2.5 self-end bg-black" />
    </RulerBox>
  );
}

function TrackFrame({ children, className = "" }: { children: ReactNode; className?: string }) {
  return <div className={`flex shrink-0 border-t-2 border-r-[3px] border-b-4 border-l-2 border-black ${className}`}>{children}</div>;
}

function StereoBody({ name, top, bottom }: { name: string; top: ReactNode; bottom: ReactNode }) {
  return (
    <>
      <Panel name={name} />
      <RulerBox>
        <ZeroMark className="h-[30px]" />
        <div className="h-[2px] border-t-2 border-[#9a9a9a]" />
        <ZeroMark className="mt-[14px] h-[26px]" />
      </RulerBox>
      <div className="flex flex-col">
        {top}
        <div className="h-[14px] border-y-2 border-black bg-[#626682]" />
        {bottom}
      </div>
    </>
  );
}

function Tracks() {
  return (
    <div className="flex h-[762px] shrink-0">
      <div className="flex w-[2504px] shrink-0 flex-col overflow-hidden bg-[#626682]">
        <TrackFrame className="ml-2 h-3 w-[2487px] border-t-0!">
          <div className="flex w-[192px] shrink-0 border-r-2 border-black bg-[#f8faff]">
            <div className="h-[7px] w-9 border-r-2 border-b-2 border-[#8e9096] bg-[#cbd7ef]" />
            <div className="h-[7px] w-[118px] border-r-2 border-b-2 border-[#8e9096] bg-[#cbd7ef]" />
          </div>
          <RulerBox>
            <span className="ml-3 h-0.5 w-1.5 bg-[#444]" />
          </RulerBox>
          <Canvas y={542} h={8}>
            <Clip x0={288} x1={422} y0={542} y1={550} />
          </Canvas>
        </TrackFrame>
        <TrackFrame className="mt-2 ml-2 h-20 w-[2487px]">
          <StereoBody name="383453__dele" top={<WaveDele y={564} h={30} />} bottom={<WaveDele y={608} h={30} />} />
        </TrackFrame>
        <TrackFrame className="mt-2 ml-2 h-20 w-[2487px]">
          <Panel name="91999__eddy" />
          <RulerBox>
            <ZeroMark className="mt-[23px] h-[28px]" />
            <span className="mt-auto h-0.5 w-1.5 self-end bg-black" />
          </RulerBox>
          <WaveEddySmall />
        </TrackFrame>
        <TrackFrame className="mt-2 ml-2 h-[292px] w-[2487px]">
          <Panel name="91999__eddy" full />
          <TallScale />
          <WaveEddyTall />
        </TrackFrame>
        <TrackFrame className="mt-2 ml-2 h-20 w-[2487px]">
          <StereoBody name="181238__mar" top={<WaveMar y={1040} h={30} />} bottom={<WaveMar y={1084} h={30} />} />
        </TrackFrame>
        <div className="mt-[2px] ml-[2px] flex w-[2501px] shrink-0 border-x-[3px] border-t-[3px] border-[#a3a283]">
          <div className="flex border-x-[3px] border-t-[3px] border-[#f3ee74]">
            <TrackFrame className="h-[292px] w-[2487px]">
              <Panel name="336598__insp" full active gain={50} />
              <TallScale active />
              <WaveInsp />
            </TrackFrame>
          </div>
        </div>
      </div>
      <div className="flex flex-1 justify-center border-l-2 border-[#ebebeb] bg-[#fbfbfb] pt-[302px]">
        <div className="h-[215px] w-4 rounded-full bg-[#c1c1c1]" />
      </div>
    </div>
  );
}

function HScroll() {
  return (
    <div className="flex h-8 shrink-0 bg-[#e9e9e9]">
      <div className="w-[272px] shrink-0 bg-[#ececec]" />
      <div className="mt-[3px] mb-px flex w-[2232px] items-center bg-[#fafafa] pl-[823px]">
        <div className="mt-px h-4 w-[1303px] rounded-full bg-[#c1c1c1]" />
      </div>
    </div>
  );
}

/* ---------- selection toolbar ---------- */
function D({ children, className = "" }: { children: string; className?: string }) {
  return <span className={`flex shrink-0 items-center justify-center ${className}`}>{children}</span>;
}

function TimeBox({ className = "" }: { className?: string }) {
  return (
    <div className={`flex h-11 w-[322px] shrink-0 border-2 border-[#c0c0c4] bg-white p-px ${className}`}>
      <div className="flex w-full items-center bg-[#b4b9c4] font-['Open_Sans'] text-[26px] leading-none text-[#0d17b0]">
        <div className="flex h-[34px] w-[44px] bg-[#d0d0d0] pt-1">
          <D className="w-[22px]">0</D>
          <D className="w-[22px]">0</D>
        </div>
        <D className="w-[30px] pt-1 text-[#3c45b4]">h</D>
        <div className="flex h-[34px] w-[44px] bg-[#d0d0d0] pt-1">
          <D className="w-[22px]">0</D>
          <D className="w-[22px]">3</D>
        </div>
        <D className="w-[37px] pt-1 text-[#3c45b4]">m</D>
        <div className="flex h-[34px] w-[45px] bg-[#d0d0d0] pt-1">
          <D className="w-[22px]">2</D>
          <D className="w-[22px]">3</D>
        </div>
        <D className="w-[7px] pt-1">.</D>
        <div className="flex h-[34px] w-[66px] bg-[#d0d0d0] pt-1">
          <D className="w-[22px]">6</D>
          <D className="w-[22px]">0</D>
          <D className="w-[22px]">0</D>
        </div>
        <D className="w-[24px] pt-1 text-[#3c45b4]">s</D>
        <div className="flex h-full flex-1 items-center justify-center border-l-2 border-white pr-1">
          <svg viewBox="0 0 14 9" className="-mt-1 h-2.5 w-3.5">
            <path d="M0 0H14L7 9Z" />
          </svg>
        </div>
      </div>
    </div>
  );
}

function BigTime() {
  return (
    <div className="mt-[16px] ml-[10px] flex h-[78px] w-[463px] shrink-0 border-2 border-[#c0c0c4] bg-white p-px pr-0">
      <div className="flex h-[72px] w-[441px] items-center bg-[#b4b9c4] pl-[3px] font-['Open_Sans'] text-[58px] leading-none text-[#0d17b0]">
        <div className="flex h-[68px] w-[80px] items-center bg-[#d0d0d0] pt-1.5">
          <D className="w-[40px]">0</D>
          <D className="w-[40px]">0</D>
        </div>
        <D className="w-[66px] pt-1.5">h</D>
        <div className="flex h-[68px] w-[80px] items-center bg-[#d0d0d0] pt-1.5">
          <D className="w-[40px]">0</D>
          <D className="w-[40px]">3</D>
        </div>
        <D className="w-[84px] pt-1.5">m</D>
        <div className="flex h-[68px] w-[80px] items-center bg-[#d0d0d0] pt-1.5">
          <D className="w-[40px]">2</D>
          <D className="w-[40px]">4</D>
        </div>
        <D className="w-[48px] pt-1.5 pl-4">s</D>
      </div>
      <div className="ml-px flex flex-1 items-center justify-center bg-[#b4b9c4]">
        <svg viewBox="0 0 14 8" className="h-2 w-3.5">
          <path d="M0 0H14L7 8Z" />
        </svg>
      </div>
    </div>
  );
}

function SelectionBar() {
  return (
    <div className="flex h-[113px] shrink-0 border-t border-[#bdbdbd]">
      <div className="flex w-[1217px] shrink-0 border-r border-b-2 border-[#bdbdbd] pl-[7px]">
        <Grip n={12} className="mt-[10px]" />
        <div className="ml-5 flex w-[296px] flex-col">
          <Fit className="mt-[15px] -ml-px w-[175px] font-['Open_Sans'] text-[22.500px] leading-[28px] text-black">Project Rate (Hz)</Fit>
          <div className="mt-[19px] flex h-10 w-[296px] overflow-hidden rounded-r-[8px] bg-white">
            <div className="flex flex-1 items-center border border-[#c0c0c0] pt-[8px] pl-[6px]">
              <Fit className="w-[76px] font-[Inter] text-[26px] leading-none text-[#222]">44100</Fit>
            </div>
            <div className="w-[35px] bg-linear-to-b from-[#6fb5f9] to-[#157bfb]">
              <svg viewBox="0 0 35 40" className="h-10 w-[35px]">
                <path d="M11 17L17.500 24L24 17" fill="none" stroke="#fff" strokeWidth="3.200" strokeLinecap="round" strokeLinejoin="round" />
              </svg>
            </div>
          </div>
        </div>
        <div className="ml-8 flex w-[158px] flex-col">
          <Fit className="mt-[15px] w-[92px] font-['Open_Sans'] text-[22.500px] leading-[28px] text-black">Snap-To</Fit>
          <Dropdown className="mt-[20px] w-[158px]">
            <Fit className="w-[38px]">Off</Fit>
          </Dropdown>
        </div>
        <div className="ml-[26px] flex flex-col">
          <Dropdown className="mt-[7px] w-[656px]">
            <Fit className="w-[317px]">Start and End of Selection</Fit>
          </Dropdown>
          <div className="mt-[11px] flex gap-3 pl-[2px]">
            <TimeBox />
            <TimeBox />
          </div>
        </div>
      </div>
      <div className="flex w-[493px] shrink-0 border-b-2 border-[#bdbdbd] pl-[6px]">
        <Grip n={12} className="mt-[10px]" />
        <BigTime />
      </div>
      <EndLines />
      <div className="ml-[2px] flex-1 border-b-2 border-[#c2c2c2]" />
    </div>
  );
}

function StatusBar() {
  return (
    <div className="flex h-12 shrink-0 items-center border-t-2 border-[#b2b0b2] bg-linear-to-b from-[#e5e3e6] to-[#c3c1c4] font-[Inter] text-[22px] leading-none text-[#474747]">
      <Fit className="ml-[10px] w-[94px]">Stopped.</Fit>
      <Fit className="ml-[232px] w-[396px]">Click and drag to move a track in time</Fit>
    </div>
  );
}

/* ---------- dock ---------- */
function Cell({ children, dot = false }: { children: ReactNode; dot?: boolean }) {
  return (
    <div className="flex w-[74.790px] shrink-0 flex-col items-center pt-[7px]">
      <svg viewBox="0 0 72 72" className="size-[72px] overflow-visible">{children}</svg>
      {dot && <div className="mt-px size-2 rounded-full bg-[#161616]" />}
    </div>
  );
}

function Badge({ t, x = 60 }: { t: string; x?: number }) {
  return (
    <g>
      <circle cx={x} cy="14" r="13.500" fill="#f2423d" />
      <text x={x} y="20.500" textAnchor="middle" fontFamily="Inter" fontSize="17" fill="#fff">{t}</text>
    </g>
  );
}

function ChromeIcon() {
  return (
    <g>
      <circle cx="36" cy="36" r="30" fill="#fdc94c" />
      <path d="M36 36L10 21A30 30 0 0 1 62 21Z" fill="#da4a3e" />
      <path d="M10 21A30 30 0 0 0 34 66L46 44L36 36L24 43Z" fill="#2ba160" />
      <path d="M36 22H62A30 30 0 0 1 34 66L48 42Z" fill="#fdc94c" />
      <circle cx="36" cy="36" r="14" fill="#fff" />
      <circle cx="36" cy="36" r="11" fill="#4c8bf0" />
    </g>
  );
}

function OfficeIcon({ letter, color, dark, children }: { letter: string; color: string; dark: string; children: ReactNode }) {
  return (
    <g>
      <rect x="38" y="12" width="28" height="48" fill="#fff" stroke="#ccc" strokeWidth=".5" />
      {children}
      <path d="M5 12L42 5V67L5 60Z" fill={color} />
      <path d="M24 8.500L42 5V67L5 60Z" fill={dark} opacity=".35" />
      <text x="21" y="47" textAnchor="middle" fontFamily="Open Sans" fontWeight="700" fontSize="29" fill="#fff">{letter}</text>
    </g>
  );
}

function Lines({ x, y, w, n, gap, color, h = 3 }: { x: number; y: number; w: number; n: number; gap: number; color: string; h?: number }) {
  return (
    <g>
      {Array.from({ length: n }, (_, i) => (
        <rect key={i} x={x} y={y + i * gap} width={w} height={h} fill={color} />
      ))}
    </g>
  );
}

const petals = ["#f79a2c", "#f3dc2f", "#b5d337", "#6cb95a", "#5ba6e0", "#8d7fc8", "#d3608f", "#ee4b36"];

function Dock() {
  return (
    <div className="flex h-[92px] shrink-0 pl-14">
      <div className="flex w-[82px] shrink-0 justify-center rounded-t-[8px] bg-[#88828a]">
        <Cell>
          <g transform="translate(1 0)">
            <ChromeIcon />
            <circle cx="59" cy="14" r="13" fill="#dcdcdc" />
            <rect x="55" y="6.500" width="8.500" height="15" rx="1.500" fill="#ccc" stroke="#111" strokeWidth="2" />
          </g>
        </Cell>
      </div>
      <div className="ml-1.5 flex w-[2360px] shrink-0 rounded-t-[8px] bg-[linear-gradient(90deg,#8b7a78_0,#93807c_120px,#997f7c_220px,#8c8288_340px,#868893_440px,#7d858f_560px,#9a948c_690px,#b5b1ae_800px,#b8b1ab_1000px,#c2b2a4_1060px,#b0ab9f_1130px,#8ba583_1220px,#8cb080_1330px,#9acb90_1500px,#96c990_1750px,#97c491_1900px,#99b094_1990px,#9b9da2_2070px,#a39490_2160px,#ab9186_2280px,#ad8a80_2360px)]">
        <Cell dot>
          <rect x="8" y="9" width="57" height="54" rx="2" fill="#e9f1fa" />
          <path d="M8 9H37C32 18 31 28 31 38H40C40 48 41 56 43 63H8Z" fill="#24a4f4" />
          <path d="M8 9H37C34 15 32.500 22 32 28H8Z" fill="#27c6f9" opacity=".7" />
          <path d="M19 46C28 54 45 54 54 46" fill="none" stroke="#16283c" strokeWidth="3" strokeLinecap="round" />
          <path d="M24 23V28M49 23V28" stroke="#16283c" strokeWidth="3" strokeLinecap="round" />
        </Cell>
        <Cell>
          <circle cx="36" cy="36" r="29" fill="#8f979b" stroke="#c4cacd" strokeWidth="2.500" />
          <path d="M8 30A29 29 0 0 1 64 30C50 22 22 22 8 30Z" fill="#a9b2b6" />
          <path d="M54 16C42 19 34 26 29 34L20 36L14 44L24 43L23 49L29 49L29 58L37 51L39 42C48 36 53 27 54 16Z" fill="#3a3f42" />
          <path d="M22 50L17 57L26 53Z" fill="#3a3f42" />
          <circle cx="44" cy="27" r="3.500" fill="#9aa1a4" />
        </Cell>
        <Cell dot>
          <ChromeIcon />
        </Cell>
        <Cell>
          <circle cx="36" cy="36" r="29.500" fill="#e8eef2" />
          <circle cx="36" cy="36" r="26.500" fill="#1f9af2" />
          <circle cx="36" cy="36" r="23" fill="none" stroke="#bfe3fb" strokeWidth="4" strokeDasharray="1 2.600" />
          <path d="M54 18L39.500 40L32 32.500Z" fill="#ec3b34" />
          <path d="M18 55L32 32.500L39.500 40Z" fill="#f4f4f4" />
        </Cell>
        <Cell>
          <g transform="rotate(-7 36 36)">
            <rect x="12" y="6" width="46" height="60" fill="#fff" stroke="#fff" strokeWidth="3" strokeDasharray="2.500 2" />
            <rect x="16" y="10" width="38" height="52" fill="#3f8fe0" />
            <rect x="16" y="44" width="38" height="18" fill="#8cc0ee" />
            <path d="M24 14C22 24 25 32 33 38L27 44L32 50L40 46C46 50 52 48 54 42L50 38L40 36C38 28 34 20 24 14Z" fill="#6f4e30" />
            <path d="M24 46L34 43L40 48L30 52Z" fill="#c08c4a" />
            <path d="M38 37L43 38L41 42Z" fill="#f4efe6" />
          </g>
          <circle cx="52" cy="54" r="12" fill="none" stroke="#557799" strokeWidth="2" opacity=".6" />
          <circle cx="52" cy="54" r="7" fill="#446688" opacity=".5" />
        </Cell>
        <Cell>
          <path d="M54 12L62 15L62 28L58 28Z" fill="#7cc7c9" />
          <path d="M55 28H62V42H56Z" fill="#4cc06c" />
          <path d="M56 42H64L62 58L56 60Z" fill="#f0a83c" />
          <path d="M8 11L52 5L58 60L16 68Z" fill="#b88d59" />
          <path d="M8 11L14 10L20 67L16 68Z" fill="#916a3c" />
          <circle cx="36" cy="33" r="14" fill="none" stroke="#a1794a" strokeWidth="2" />
          <path d="M27 43C28 37 33 38 33 35C29 29 32 23 37 23S44 29 41 35C41 38 46 37 46 43Z" fill="#a1794a" />
        </Cell>
        <Cell>
          <g transform="rotate(-6 36 36)">
            <rect x="10" y="16" width="52" height="52" rx="3" fill="#3f4a4b" />
            <rect x="8" y="8" width="52" height="52" rx="4" fill="#fafafa" />
            <path d="M8 26V12C8 10 10 8 12 8H56C58 8 60 10 60 12V26Z" fill="#e2453b" />
            <text x="30" y="22" textAnchor="middle" fontFamily="Inter" fontSize="12" fill="#fff">SEP</text>
            <text x="34" y="53" textAnchor="middle" fontFamily="Inter" fontWeight="300" fontSize="30" fill="#222">15</text>
          </g>
          <Badge t="10" />
        </Cell>
        <Cell>
          <g transform="rotate(-6 36 36)">
            <rect x="12" y="7" width="48" height="58" rx="1.500" fill="#fbfbf8" />
            <rect x="12" y="7" width="48" height="12" fill="#f8cf3c" />
            <Lines x={14} y={25} w={44} n={8} gap={5} h={1} color="#d6d6d6" />
          </g>
        </Cell>
        <Cell>
          <g transform="rotate(-5 36 36)">
            <rect x="14" y="8" width="48" height="60" rx="5" fill="#333" />
            <rect x="12" y="6" width="48" height="60" rx="5" fill="#fcfcfc" />
            <circle cx="21" cy="20" r="4" fill="#f7932a" />
            <circle cx="21" cy="31" r="4" fill="#24a5ee" />
            <circle cx="21" cy="42" r="4" fill="#56d039" />
            <circle cx="21" cy="53" r="4" fill="#c974e0" />
            <Lines x={29} y={24} w={28} n={4} gap={11} h={1} color="#e4e4e4" />
          </g>
        </Cell>
        <Cell>
          <g transform="rotate(-6 34 36)">
            <rect x="6" y="10" width="54" height="52" fill="#f5f1e6" stroke="#fff" strokeWidth="2" />
            <path d="M6 12H38V20H6Z" fill="#8fce6e" />
            <path d="M6 22H60V26H6Z" fill="#58bdf0" />
            <path d="M46 10H60V20H46Z" fill="#f3c2cc" />
            <path d="M8 44L24 42L40 62H28Z" fill="#f8cb3e" />
            <path d="M34 26L44 26L40 62L34 56Z" fill="#b9dcf2" />
            <path d="M16 30H34C34 40 30 44 25 46C20 44 16 40 16 30Z" fill="#4b7fd0" />
            <path d="M16 30H34V34H16Z" fill="#e0453c" />
            <text x="25" y="42" textAnchor="middle" fontFamily="Inter" fontSize="8" fontWeight="700" fill="#fff">280</text>
          </g>
          <circle cx="54" cy="48" r="14.500" fill="#f6f6f6" stroke="#ccc" />
          <circle cx="54" cy="48" r="9" fill="none" stroke="#6fa2c4" strokeWidth="1.500" />
          <text x="54" y="52" textAnchor="middle" fontFamily="Inter" fontSize="11" fill="#444">3D</text>
          <path d="M54 34L57 39H51Z" fill="#d33" />
        </Cell>
        <Cell>
          <circle cx="36" cy="36" r="29.500" fill="#f1f1f1" stroke="#d8d8d8" />
          {petals.map((p, i) => (
            <rect key={p} x="28" y="10" width="16" height="25" rx="8" fill={p} opacity=".9" className="mix-blend-multiply" transform={`rotate(${i * 45} 36 36)`} />
          ))}
          <circle cx="36" cy="36" r="2" fill="#fff" />
        </Cell>
        <Cell>
          <OfficeIcon letter="X" color="#2f8f5b" dark="#1c5f3a">
            <rect x="42" y="18" width="18" height="5" fill="#222" />
            <Lines x={42} y={25} w={8} n={5} gap={6.400} h={5} color="#2f8f5b" />
            <Lines x={52} y={25} w={8} n={5} gap={6.400} h={5} color="#2f8f5b" />
          </OfficeIcon>
        </Cell>
        <Cell>
          <OfficeIcon letter="N" color="#8a3bc0" dark="#5a1d86">
            <Lines x={42} y={18} w={16} n={6} gap={7} color="#222" />
            <path d="M60 14H67V26H60Z" fill="#fff" />
            <path d="M62 29H67V41H62ZM62 44H67V57H62Z" fill="#b27ad6" />
          </OfficeIcon>
        </Cell>
        <Cell>
          <OfficeIcon letter="P" color="#e8583a" dark="#bc3820">
            <circle cx="49" cy="29" r="9" fill="#333" />
            <path d="M51 28V18A9 9 0 0 1 60 28Z" fill="#d8604a" />
            <Lines x={42} y={43} w={19} n={3} gap={5} h={2} color="#d8604a" />
          </OfficeIcon>
        </Cell>
        <Cell dot>
          <OfficeIcon letter="W" color="#3b6fb8" dark="#204a8c">
            <Lines x={42} y={18} w={20} n={6} gap={7} color="#222" />
            <Lines x={54} y={18} w={8} n={3} gap={14} color="#4b7fc4" />
          </OfficeIcon>
        </Cell>
        <Cell>
          <path d="M36 8C52 8 65 19 65 33S52 57 36 57C32 57 28 57 25 55C22 59 18 61 14 61C17 58 18 55 17 51C10 47 6 40 6 33C6 19 20 8 36 8Z" fill="#2ea3f7" />
          <path d="M47 34C57 34 64 40 64 48C64 52 62 55 59 58C59 61 60 63 62 65C58 65 55 63 53 62C38 64 30 56 30 48C30 40 37 34 47 34Z" fill="#f6f9fc" />
          <circle cx="39" cy="48" r="3" fill="#1f6fb0" />
          <circle cx="47" cy="48" r="3" fill="#1f6fb0" />
          <circle cx="55" cy="48" r="3" fill="#1f6fb0" />
          <Badge t="64" x={59} />
        </Cell>
        <Cell>
          <rect x="6" y="10" width="56" height="48" rx="8" fill="#2ad03e" />
          <rect x="14" y="22" width="27" height="23" rx="4" fill="#f4f4f4" />
          <path d="M42 32L52 24V44L42 36Z" fill="#f4f4f4" />
          <circle cx="52" cy="46" r="15" fill="#f4f6f4" />
          <path d="M45 38C43 46 50 55 58 54L60 50L56 47L53 49C50 47 49 45 48 42L50 40L48 36Z" fill="#2dc93f" />
          <Badge t="3" />
        </Cell>
        <Cell>
          <circle cx="36" cy="36" r="30" fill="#2ed16a" />
          <path d="M16 26C30 21 46 23 57 29" fill="none" stroke="#141414" strokeWidth="6" strokeLinecap="round" />
          <path d="M18 37C30 33 43 34 53 40" fill="none" stroke="#141414" strokeWidth="5" strokeLinecap="round" />
          <path d="M20 47C30 44 40 45 49 50" fill="none" stroke="#141414" strokeWidth="4" strokeLinecap="round" />
        </Cell>
        <Cell>
          <g transform="rotate(-8 36 36)">
            <rect x="12" y="7" width="46" height="58" fill="#f8f8f8" />
            <rect x="12" y="7" width="46" height="13" fill="#f79526" />
            <text x="14" y="18" fontFamily="Inter" fontSize="8.500" fill="#fff">PAGES</text>
            <rect x="16" y="23" width="18" height="18" fill="#4795dc" />
            <path d="M21 27L25 30L29 26L31 33L25 39L20 34Z" fill="#f28a25" />
            <Lines x={37} y={24} w={15} n={7} gap={3.500} h={1} color="#aaa" />
            <Lines x={16} y={46} w={36} n={5} gap={3.500} h={1} color="#aaa" />
          </g>
          <path d="M57 4L63 6L49 56L43 54Z" fill="#f5a235" stroke="#b46e1c" strokeWidth=".8" />
          <path d="M44 50L50 52L45 68Z" fill="#333" />
        </Cell>
        <Cell>
          <rect x="6" y="40" width="60" height="24" fill="#f6f6f6" />
          <rect x="15" y="36" width="10" height="22" fill="#ee3e55" />
          <rect x="27" y="25" width="10" height="33" fill="#f78b23" />
          <rect x="39" y="8" width="10" height="50" fill="#2fc254" />
          <rect x="51" y="18" width="10" height="40" fill="#2f8ff0" />
          <path d="M15 36H25V39H15ZM27 25H37V28H27ZM39 8H49V11H39ZM51 18H61V21H51Z" fill="#fff" opacity=".4" />
        </Cell>
        <Cell>
          <path d="M12 6H60L64 28H8Z" fill="#2ea4ea" />
          <path d="M8 28H64V32H8Z" fill="#1b7fc4" />
          <rect x="18" y="9" width="36" height="17" fill="#f4f4f4" />
          <circle cx="29" cy="18" r="7" fill="#f0c02f" />
          <path d="M29 18V11A7 7 0 0 1 36 18Z" fill="#5bc24f" />
          <path d="M29 18H22A7 7 0 0 1 29 11Z" fill="#e3507f" />
          <Lines x={40} y={13} w={10} n={4} gap={3} h={1} color="#b8c8d8" />
          <path d="M34 32H38V62H34Z" fill="#cfd4d9" />
          <ellipse cx="36" cy="63" rx="13" ry="5" fill="#c3c9cf" />
          <ellipse cx="36" cy="61.500" rx="12" ry="3.500" fill="#e6eaed" />
        </Cell>
        <Cell>
          <defs>
            <linearGradient id="note" x1="0" y1="0" x2="0" y2="1">
              <stop offset="0" stopColor="#f8485f" />
              <stop offset=".55" stopColor="#b44be0" />
              <stop offset="1" stopColor="#2fb6f4" />
            </linearGradient>
          </defs>
          <circle cx="36" cy="36" r="28.500" fill="#f7f7f9" stroke="url(#note)" strokeWidth="3.500" />
          <path d="M29 23L50 18V45C50 49 46 51 43 51S38 49 38 46S41 41 46 41V28L33 31V49C33 53 29 55 26 55S20 53 20 50S24 45 29 45Z" fill="url(#note)" />
        </Cell>
        <Cell>
          <circle cx="36" cy="36" r="29.500" fill="#f0ede8" />
          <circle cx="36" cy="36" r="27" fill="#f08418" />
          <path d="M9.500 40A27 27 0 0 0 62.500 40Z" fill="#e2561c" opacity=".7" />
          <path d="M36 25C31 20 24 20 18 22V49C24 47 31 47 36 51C41 47 48 47 54 49V22C48 20 41 20 36 25Z" fill="#fff" />
          <path d="M36 25V50" stroke="#e8751c" strokeWidth="2" />
        </Cell>
        <Cell>
          <circle cx="36" cy="36" r="29.500" fill="#eaf0f4" />
          <circle cx="36" cy="36" r="27" fill="#1f98f4" />
          <path d="M36 17L20 49M36 17L52 49M15 38H57" fill="none" stroke="#fff" strokeWidth="4.500" strokeLinecap="round" />
          <path d="M33 38H39" stroke="#1f98f4" strokeWidth="2" />
        </Cell>
        <Cell>
          <rect x="6" y="8" width="60" height="56" rx="3" fill="#a9b3b6" />
          <path d="M6 40H66V61C66 63 65 64 63 64H9C7 64 6 63 6 61Z" fill="#82878a" />
          <circle cx="36" cy="36" r="25" fill="#1e1e1e" />
          <circle cx="36" cy="36" r="19" fill="#4a4a4a" stroke="#b8b8b8" strokeWidth="3.500" />
          <circle cx="36" cy="36" r="22" fill="none" stroke="#b8b8b8" strokeWidth="3" strokeDasharray="2.400 2.300" />
          <path d="M36 36L18 28M36 36L53 27M36 36L37 55" stroke="#c0c0c0" strokeWidth="3.500" />
          <circle cx="36" cy="36" r="4.500" fill="#d5d5d5" />
        </Cell>
        <Cell>
          <rect x="4.500" y="4.500" width="63" height="63" fill="#350a3c" stroke="#d77be8" strokeWidth="3" />
          <text x="37" y="47" textAnchor="middle" fontFamily="Open Sans" fontSize="38" fill="#ea8cf6">Pr</text>
        </Cell>
        <Cell>
          <rect x="4.500" y="4.500" width="63" height="63" fill="#26094a" stroke="#bb92e8" strokeWidth="3" />
          <text x="36" y="47" textAnchor="middle" fontFamily="Open Sans" fontSize="38" textLength="42" lengthAdjust="spacingAndGlyphs" fill="#d6a5fb">Ae</text>
        </Cell>
        <Cell dot>
          <path d="M23 38L60 40L58 64L22 66Z" fill="#f5e97c" />
          <path d="M34 16L69 17L69 49L36 47Z" fill="#f8ed84" />
          <path d="M4 16L38 6L46 38L14 48Z" fill="#f9f08c" />
          <text x="11" y="35" fontFamily="Lato" fontStyle="italic" fontSize="8.500" fill="#555" transform="rotate(-16 11 35)">555-7361</text>
          <path d="M16 39L40 32" stroke="#777" />
          <text x="18" y="22" fontFamily="Lato" fontStyle="italic" fontSize="8" fill="#555" transform="rotate(-14 18 22)">Lou</text>
          <text x="45" y="34" fontFamily="Lato" fontStyle="italic" fontWeight="700" fontSize="9" fill="#e0402e">Eggs</text>
          <text x="32" y="57" fontFamily="Lato" fontStyle="italic" fontSize="9" fill="#333">Milk</text>
        </Cell>
        <Cell dot>
          <path d="M19 50L21 36L24 40L27 27L29 36L32 22L34 34L36 20L38 34L41 24L43 36L46 28L48 40L51 36L53 50C51 62 42 66 36 66S21 62 19 50Z" fill="#e8bc48" />
          <path d="M19 48L21 43L24 46L26 41L28 45L30 38L32 46L34 40L36 46L38 36L40 46L42 40L44 46L46 41L48 46L51 43L53 48V51L51 54L48 50L46 56L43 50L41 57L38 50L36 58L34 50L31 56L28 50L25 55L22 50L19 52Z" fill="#f02418" />
          <path d="M12 40C10 -6 62 -6 60 40" fill="none" stroke="#1626e8" strokeWidth="6" />
          <path d="M16 26C4 26 0 42 4 54C7 62 12 62 18 62Z" fill="#1626e8" />
          <path d="M56 26C68 26 72 42 68 54C65 62 60 62 54 62Z" fill="#1626e8" />
          <path d="M15.500 28V61M56.500 28V61" stroke="#8c96d8" strokeWidth="1.500" />
        </Cell>
        <div className="mt-3 ml-4 h-[70px] w-0.5 self-start bg-black/35" />
        <div className="ml-[15px] flex">
          <Cell>
            <rect x="10" y="3" width="54" height="66" fill="#fbfbfb" />
            <rect x="10" y="3" width="54" height="5" fill="#3565ad" />
            <rect x="10" y="8" width="54" height="7" fill="#e9e9ec" />
            <rect x="10" y="15" width="54" height="1.500" fill="#e8d9ae" />
            <Lines x={19} y={21} w={26} n={4} gap={4.500} h={1} color="#999" />
            <Lines x={19} y={39} w={36} n={3} gap={4.500} h={1} color="#999" />
            <Lines x={19} y={52} w={18} n={3} gap={4.500} h={1} color="#999" />
            <rect x="58" y="48" width="11" height="18" fill="#fff" />
            <Lines x={59} y={50} w={8} n={5} gap={3.200} h={1.300} color="#222" />
            <path d="M46 48L60 45V68L46 65Z" fill="#2b5fae" />
            <text x="53" y="61" textAnchor="middle" fontFamily="Open Sans" fontWeight="700" fontSize="11" fill="#fff">W</text>
          </Cell>
          <Cell>
            <path d="M12 12L60 12L54 62C50 68 22 68 18 62Z" fill="#dcdad8" />
            <path d="M20 20L26 60M36 22V62M52 20L46 60" stroke="#c9c6c4" strokeWidth="3" opacity=".7" />
            <ellipse cx="36" cy="13" rx="24.500" ry="7" fill="#c9c7c5" stroke="#f4f4f4" strokeWidth="2" />
            <path d="M16 14L24 5L30 12L37 2L42 10L51 4L57 13L44 19H26Z" fill="#f6f6f6" />
            <path d="M24 8L28 14L22 16ZM38 6L42 12L36 15ZM49 7L54 13L48 16Z" fill="#444" />
            <path d="M32 11L37 14L33 16Z" fill="#3fa7b8" />
            <path d="M44 12L48 15L44 17Z" fill="#c96b3c" />
          </Cell>
        </div>
      </div>
    </div>
  );
}

export default function App() {
  return (
    <div className="relative flex h-[1600px] w-[2560px] flex-col overflow-hidden bg-[linear-gradient(180deg,#a58a80_46px,#9b6f58_130px,#a9683f_190px,#3a3350_250px,#8f8da3_310px,#2d2c3a_350px,#5c8d92_400px,#2b2d3a_430px,#2c3040_510px,#4b5a6c_560px,#3a3138_630px,#b9b5a8_660px,#b7b4a2_850px,#9fac92_960px,#99a385_1150px,#9ea2a0_1240px,#3c4238_1275px,#39696a_1310px,#3c6a66_1370px,#506c54_1420px,#5e8060_1460px,#2c2734_1490px,#1d1a28_1530px,#5b2b33_1570px,#2a2630_1600px)]">
      <MenuBar />
      <div className="h-0.5 shrink-0 bg-[#22303f]" />
      <div className="ml-[24px] flex h-[1452px] w-[2536px] shrink-0 flex-col overflow-hidden rounded-[9px] bg-[#f8faff] shadow-[0_0_0_2px_#9a9a9a80,0_2px_8px_#00000080]">
        <div className="flex h-[45px] shrink-0 items-center border-b-2 border-[#b3b0b3] bg-linear-to-b from-[#ebe9ec] to-[#d2d0d3]">
          <div className="flex gap-4 pl-4">
            <div className="size-6 rounded-full border border-[#e2463f] bg-[#fc605b]" />
            <div className="size-6 rounded-full border border-[#dfa032] bg-[#fdbc40]" />
            <div className="size-6 rounded-full border border-[#24a733] bg-[#34c648]" />
          </div>
          <Fit className="mt-0.5 ml-[1041px] w-[214px] font-[Inter] text-[25.500px] leading-none text-[#3b3b3b]">The Final Delivery</Fit>
        </div>
        <RowTop />
        <RowMixer />
        <RowDevice />
        <RowTools />
        <RowRecMeter />
        <TimeRuler />
        <Tracks />
        <HScroll />
        <SelectionBar />
        <StatusBar />
      </div>
      <div className="flex h-[10px] shrink-0 overflow-hidden bg-[linear-gradient(90deg,#1f1b28_0,#2c2730_60px,#3b3236_200px,#4a3c3a_330px,#5b5057_420px,#3f3a46_520px,#5e565b_620px,#57504e_1000px,#4b5050_1180px,#2b4b47_1260px,#3a5552_1351px,#4c6b49_1353px,#4f744d_2011px,#85838a_2013px,#83828a_2092px,#36451f_2095px,#3b4a24_2174px,#6d6f7a_2177px,#5a2a2c_2230px,#7c6464_2320px,#5f2427_2440px,#6a7780_2510px,#3f6a6c_2560px)]">
        <span className="-mt-[3px] ml-[1374px] font-['Liberation_Sans'] text-[24px] leading-[26px] text-[#0c140c]">1. 0:46</span>
      </div>
      <div className="relative shrink-0">
        <div className="absolute top-0 right-0 h-[92px] w-[64px] bg-[linear-gradient(115deg,#7a2f2c_0%,#5f2a2a_20%,#8d8f9c_45%,#6c8d92_60%,#8b8172_75%,#7d86a0_100%)]" />
        <div className="relative">
          <Dock />
        </div>
      </div>
    </div>
  );
}
